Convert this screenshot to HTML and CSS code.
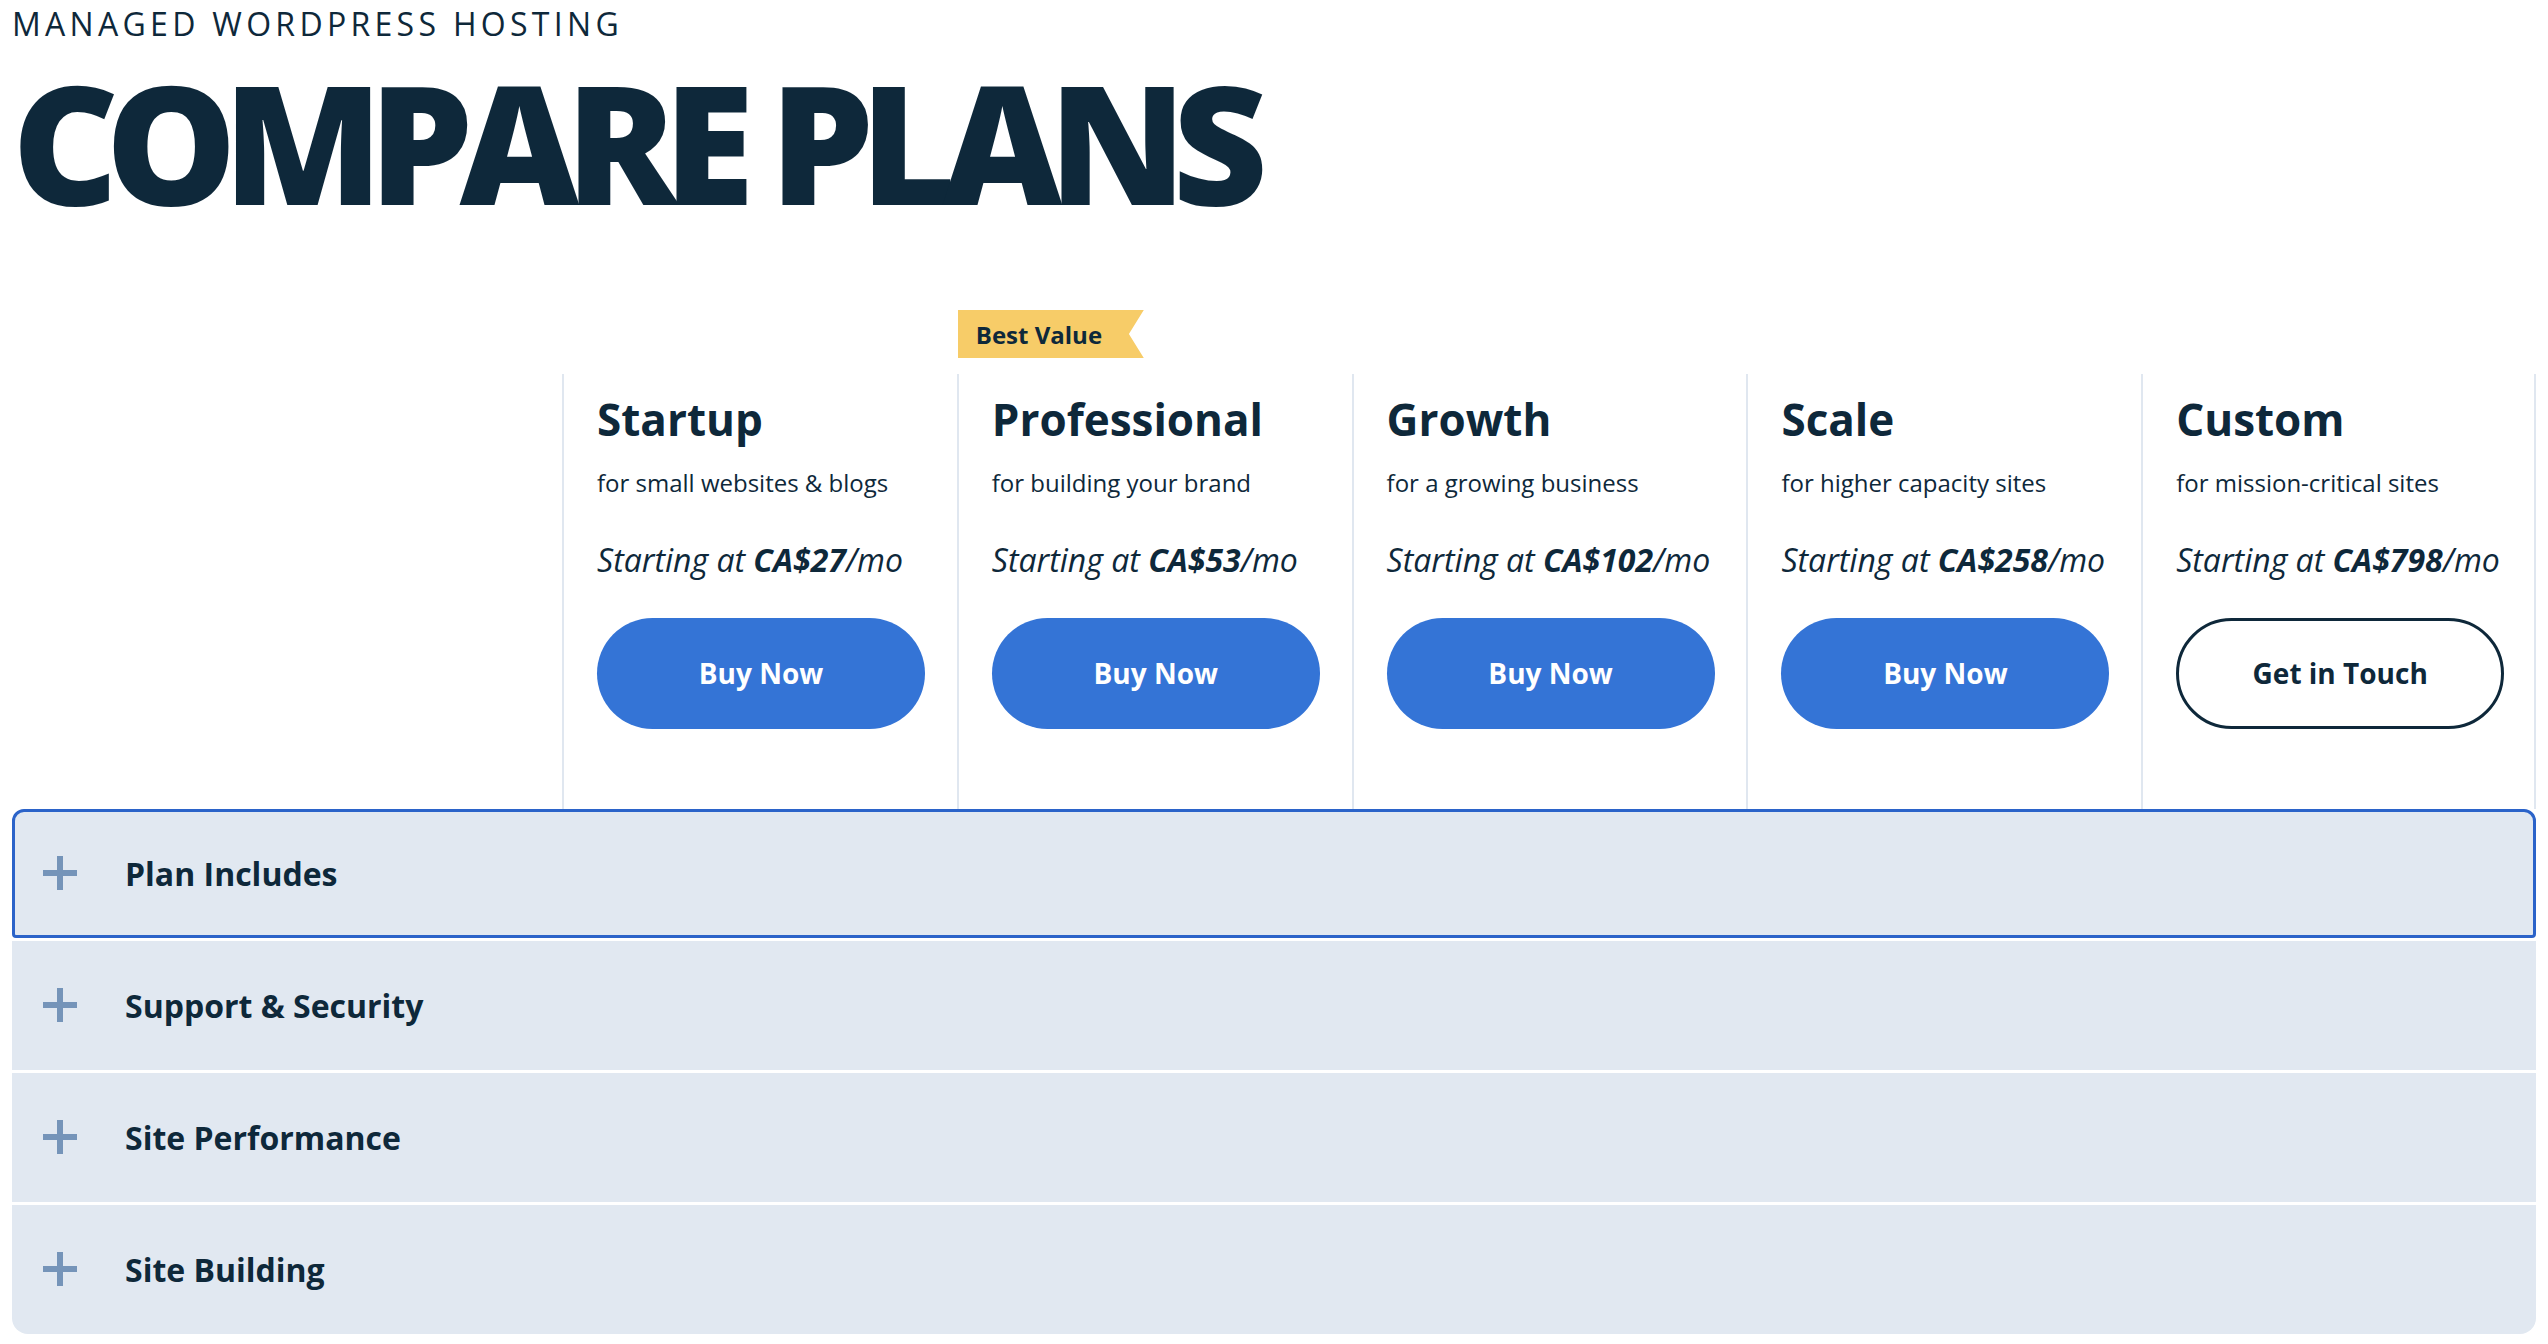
FILE: index.html
```html
<!DOCTYPE html>
<html lang="en">
<head>
<meta charset="utf-8">
<title>Compare Plans</title>
<link rel="stylesheet" href="styles.css">
</head>
<body>
<div class="page">
  <div class="eyebrow">MANAGED WORDPRESS HOSTING</div>
  <h1 class="title">COMPARE PLANS</h1>

  <div class="plans">
    <div class="spacer"></div>
    <div class="plan">
      <h2 class="plan-name">Startup</h2>
      <p class="plan-desc">for small websites &amp; blogs</p>
      <p class="plan-price">Starting at <b>CA$27</b>/mo</p>
      <a class="btn btn-buy" href="#">Buy Now</a>
    </div>
    <div class="plan">
      <div class="badge">Best Value</div>
      <h2 class="plan-name">Professional</h2>
      <p class="plan-desc">for building your brand</p>
      <p class="plan-price">Starting at <b>CA$53</b>/mo</p>
      <a class="btn btn-buy" href="#">Buy Now</a>
    </div>
    <div class="plan">
      <h2 class="plan-name">Growth</h2>
      <p class="plan-desc">for a growing business</p>
      <p class="plan-price">Starting at <b>CA$102</b>/mo</p>
      <a class="btn btn-buy" href="#">Buy Now</a>
    </div>
    <div class="plan">
      <h2 class="plan-name">Scale</h2>
      <p class="plan-desc">for higher capacity sites</p>
      <p class="plan-price">Starting at <b>CA$258</b>/mo</p>
      <a class="btn btn-buy" href="#">Buy Now</a>
    </div>
    <div class="plan plan-last">
      <h2 class="plan-name">Custom</h2>
      <p class="plan-desc">for mission-critical sites</p>
      <p class="plan-price">Starting at <b>CA$798</b>/mo</p>
      <a class="btn btn-touch" href="#">Get in Touch</a>
    </div>
  </div>

  <div class="accordion">
    <div class="acc-row acc-active">
      <svg class="plus" viewBox="0 0 34 34" width="34" height="34"><rect x="14" y="0" width="6" height="34"/><rect x="0" y="14" width="34" height="6"/></svg>
      <span class="acc-label">Plan Includes</span>
    </div>
    <div class="acc-row">
      <svg class="plus" viewBox="0 0 34 34" width="34" height="34"><rect x="14" y="0" width="6" height="34"/><rect x="0" y="14" width="34" height="6"/></svg>
      <span class="acc-label">Support &amp; Security</span>
    </div>
    <div class="acc-row">
      <svg class="plus" viewBox="0 0 34 34" width="34" height="34"><rect x="14" y="0" width="6" height="34"/><rect x="0" y="14" width="34" height="6"/></svg>
      <span class="acc-label">Site Performance</span>
    </div>
    <div class="acc-row acc-last">
      <svg class="plus" viewBox="0 0 34 34" width="34" height="34"><rect x="14" y="0" width="6" height="34"/><rect x="0" y="14" width="34" height="6"/></svg>
      <span class="acc-label">Site Building</span>
    </div>
  </div>
</div>
</body>
</html>
```

FILE: styles.css
```css
* { box-sizing: border-box; }

html, body {
  margin: 0;
  padding: 0;
  background: #ffffff;
}

body {
  font-family: "Open Sans", "Noto Sans", sans-serif;
  color: #0e283a;
}

.page {
  padding: 0 12px;
  width: 2548px;
}

.eyebrow {
  font-size: 32px;
  font-weight: 400;
  line-height: 47px;
  letter-spacing: 4.3px;
}

.title {
  margin: 0;
  font-size: 165px;
  font-weight: 800;
  line-height: 188px;
  letter-spacing: -0.083em;
}

.plans {
  display: grid;
  grid-template-columns: 550px repeat(5, 1fr);
  margin-top: 139px;
}

.plan {
  position: relative;
  border-left: 2px solid #e0e7f0;
  padding: 19px 0 80px 33px;
  display: flex;
  flex-direction: column;
  align-items: flex-start;
}

.plan-last {
  border-right: 2px solid #e0e7f0;
}

.badge {
  position: absolute;
  top: -64px;
  left: -1px;
  width: 186px;
  height: 48px;
  background: #f7cc68;
  clip-path: polygon(0 0, 100% 0, 92% 50%, 100% 100%, 0 100%);
  display: flex;
  align-items: center;
  padding-left: 18px;
  font-size: 24px;
  font-weight: 700;
  color: #0e283a;
}

.plan-name {
  margin: 0;
  font-size: 44px;
  font-weight: 700;
  line-height: 52.8px;
}

.plan-desc {
  margin: 19px 0 0;
  font-size: 24px;
  line-height: 36px;
}

.plan-price {
  margin: 36px 0 0;
  font-size: 32px;
  font-style: italic;
  line-height: 46px;
}

.plan-price b {
  font-weight: 700;
}

.btn {
  margin-top: 35px;
  width: 328px;
  height: 111px;
  border-radius: 56px;
  display: flex;
  align-items: center;
  justify-content: center;
  font-size: 28px;
  font-weight: 700;
  text-decoration: none;
}

.btn-buy {
  background: #3474d6;
  color: #ffffff;
}

.btn-touch {
  background: #ffffff;
  color: #0e283a;
  border: 3px solid #0e283a;
}

.accordion {
  display: flex;
  flex-direction: column;
  gap: 3px;
}

.acc-row {
  height: 129px;
  background: #e1e8f1;
  border: 3px solid transparent;
  display: flex;
  align-items: center;
  padding-left: 28px;
  gap: 48px;
}

.acc-active {
  border-color: #2b63c9;
  border-radius: 12px 12px 4px 4px;
}

.acc-last {
  border-radius: 0 0 16px 16px;
}

.plus {
  flex: none;
  fill: #7594b9;
}

.acc-label {
  font-size: 32px;
  font-weight: 700;
  line-height: 40px;
  padding-top: 2px;
}
```
